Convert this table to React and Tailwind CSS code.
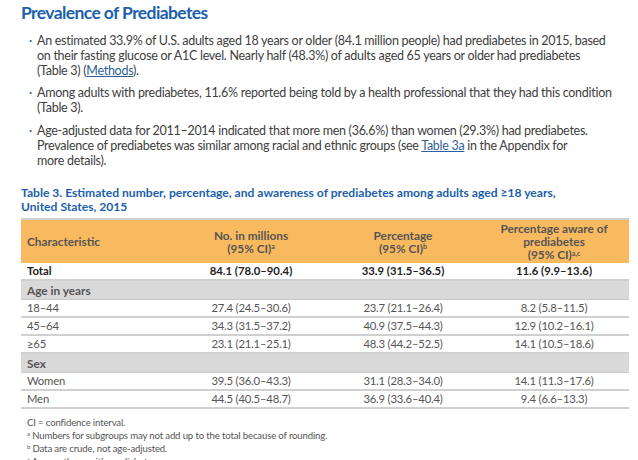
import React from 'react';

const rows = [
  { type: 'total', label: 'Total', a: '84.1 (78.0–90.4)', b: '33.9 (31.5–36.5)', c: '11.6 (9.9–13.6)' },
  { type: 'group', label: 'Age in years' },
  { label: '18–44', a: '27.4 (24.5–30.6)', b: '23.7 (21.1–26.4)', c: '8.2 (5.8–11.5)' },
  { label: '45–64', a: '34.3 (31.5–37.2)', b: '40.9 (37.5–44.3)', c: '12.9 (10.2–16.1)' },
  { label: '≥65', a: '23.1 (21.1–25.1)', b: '48.3 (44.2–52.5)', c: '14.1 (10.5–18.6)' },
  { type: 'group', label: 'Sex' },
  { label: 'Women', a: '39.5 (36.0–43.3)', b: '31.1 (28.3–34.0)', c: '14.1 (11.3–17.6)' },
  { label: 'Men', a: '44.5 (40.5–48.7)', b: '36.9 (33.6–40.4)', c: '9.4 (6.6–13.3)' },
];

const Bullet = ({ children }) => (
  <li className="flex">
    <span className="w-[16px] shrink-0 pl-[8px] text-[#1f5fa6]">·</span>
    <span className="whitespace-nowrap">{children}</span>
  </li>
);

const Row = ({ r }) => {
  if (r.type === 'group') {
    return (
      <div className="flex h-[19px] items-center bg-[#d9d9da] border-b border-[#c9c9c9] pl-[6px] font-bold text-[11.8px] text-[#555]">
        {r.label}
      </div>
    );
  }
  const total = r.type === 'total';
  return (
    <div className={`grid grid-cols-[154px_152px_152px_150px] h-[18px] items-center border-b-2 border-[#d0d0d0] text-[11.3px] ${total ? 'font-bold text-[#222]' : 'text-[#555] tracking-[-0.2px]'}`}>
      <span className="pl-[6px]">{r.label}</span>
      <span className="text-center">{r.a}</span>
      <span className="text-center">{r.b}</span>
      <span className="text-center">{r.c}</span>
    </div>
  );
};

export default function App() {
  return (
    <div className="w-[638px] h-[460px] overflow-hidden bg-white pl-[21px] pt-[2px] font-['Lato',sans-serif] text-[#404040]">
      <h1 className="text-[17.5px] font-bold leading-[22px] tracking-[-0.6px] text-[#1b5fad]">Prevalence of Prediabetes</h1>
      <ul className="mt-[10px] flex flex-col gap-[8px] text-[12.5px] leading-[14.8px] tracking-[-0.28px]">
        <Bullet>
          An estimated 33.9% of U.S. adults aged 18 years or older (84.1 million people) had prediabetes in 2015, based<br />
          on their fasting glucose or A1C level. Nearly half (48.3%) of adults aged 65 years or older had prediabetes<br />
          (Table 3) (<span className="underline text-[#2f5f9a]">Methods</span>).
        </Bullet>
        <Bullet>
          Among adults with prediabetes, 11.6% reported being told by a health professional that they had this condition<br />
          (Table 3).
        </Bullet>
        <Bullet>
          Age-adjusted data for 2011–2014 indicated that more men (36.6%) than women (29.3%) had prediabetes.<br />
          Prevalence of prediabetes was similar among racial and ethnic groups (see <span className="underline text-[#2f5f9a]">Table 3a</span> in the Appendix for<br />
          more details).
        </Bullet>
      </ul>
      <p className="mt-[18px] whitespace-nowrap text-[12.1px] font-bold leading-[14px] text-[#1b5fad]">
        Table 3. Estimated number, percentage, and awareness of prediabetes among adults aged ≥18 years,<br />
        United States, 2015
      </p>
      <div className="mt-[4px] w-[608px]">
        <div className="grid grid-cols-[154px_152px_152px_150px] h-[45px] items-center bg-[#f9b95f] border-t-2 border-[#cfcfcf] text-[11.8px] font-bold leading-[13px] text-[#555]">
          <span className="pl-[6px]">Characteristic</span>
          <span className="text-center">No. in millions<br />(95% CI)<sup className="text-[7px]">a</sup></span>
          <span className="text-center">Percentage<br />(95% CI)<sup className="text-[7px]">b</sup></span>
          <span className="text-center">Percentage aware of<br />prediabetes<br />(95% CI)<sup className="text-[7px]">a,c</sup></span>
        </div>
        {rows.map((r, i) => <Row key={i} r={r} />)}
      </div>
      <div className="mt-[7px] pl-[6px] text-[9.6px] leading-[13px] tracking-[-0.15px] text-[#555]">
        <p>CI = confidence interval.</p>
        <p><sup className="text-[6px]">a</sup> Numbers for subgroups may not add up to the total because of rounding.</p>
        <p><sup className="text-[6px]">b</sup> Data are crude, not age-adjusted.</p>
        <p><sup className="text-[6px]">c</sup> Among those with prediabetes.</p>
      </div>
    </div>
  );
}
